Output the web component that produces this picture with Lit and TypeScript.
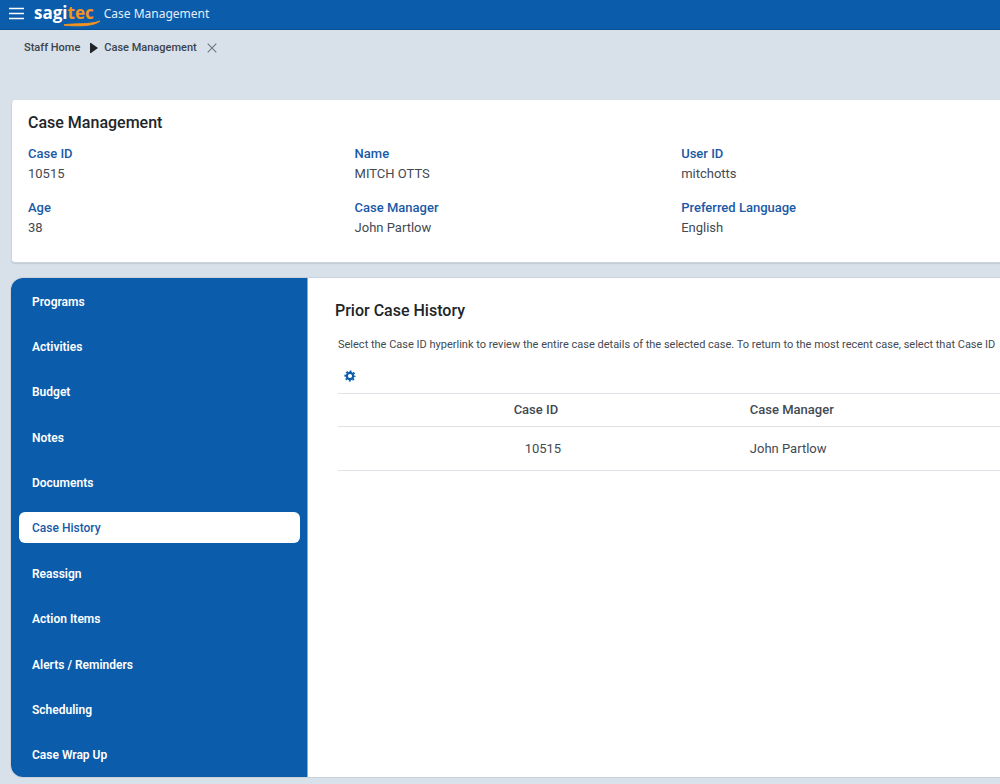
import { LitElement, html, css } from "lit";
import { customElement, state } from "lit/decorators.js";

const FIELDS = [
  ["Case ID", "10515"],
  ["Name", "MITCH OTTS"],
  ["User ID", "mitchotts"],
  ["Age", "38"],
  ["Case Manager", "John Partlow"],
  ["Preferred Language", "English"],
];

const SECTIONS = [
  "Programs",
  "Activities",
  "Budget",
  "Notes",
  "Documents",
  "Case History",
  "Reassign",
  "Action Items",
  "Alerts / Reminders",
  "Scheduling",
  "Case Wrap Up",
];

@customElement("app-root")
export class AppRoot extends LitElement {
  static styles = css`
    :host {
      display: flex;
      flex-direction: column;
      box-sizing: border-box;
      min-height: 100vh;
      padding-bottom: 7px;
      overflow-x: hidden;
      background: #d8e0ea;
      color: #424a52;
      font: 400 13px/20px Roboto, sans-serif;
    }
    *, *::before, *::after { box-sizing: border-box; }
    h1, h2, p, dl, dd, ul { margin: 0; padding: 0; }
    button {
      display: flex;
      border: 0;
      padding: 0;
      background: none;
      cursor: pointer;
    }
    .topbar {
      display: flex;
      align-items: center;
      height: 30px;
      padding: 0 9px 2px;
      background: #0b5cab;
      border-bottom: 1px solid #084f97;
      color: #fff;
    }
    .brand {
      position: relative;
      margin-left: 10px;
      padding-bottom: 2px;
      font: 700 17px/24px "Open Sans", sans-serif;
      color: #fff;
    }
    .brand .accent { color: #f7941d; }
    .swoosh {
      position: absolute;
      left: 29px;
      bottom: 0;
    }
    .product {
      margin-left: 10px;
      font: 400 12px/24px "Noto Sans", sans-serif;
      color: #e4eefa;
    }
    .crumbs {
      display: flex;
      align-items: center;
      height: 35px;
      padding-left: 24px;
      font-size: 11px;
      font-weight: 500;
    }
    .crumbs a { color: #3c434a; text-decoration: none; }
    .crumbs .arrow { margin: 0 6px 0 10px; }
    .crumbs button { margin-left: 10px; }
    .summary {
      margin: 35px 0 0 11px;
      padding: 13px 0 24px 16px;
      background: #fff;
      border: 1px solid #ccd4dd;
      border-width: 0 0 1px 1px;
      border-radius: 4px 0 0 4px;
      box-shadow: 0 1px 1px #c3cbd5;
    }
    h1, h2 {
      font-size: 16px;
      line-height: 20px;
      font-weight: 500;
      color: #212529;
    }
    .fields {
      display: grid;
      grid-template-columns: 33.6% 33.6% 1fr;
      row-gap: 14px;
      margin-top: 11px;
    }
    dt { font-weight: 500; color: #1a59a6; line-height: 20px; }
    .work {
      display: flex;
      flex: 1;
      margin: 15px 0 0 11px;
      background: #fff;
      border-radius: 12px 0 0 12px;
      box-shadow: 0 0 0 1px #cbd1d8;
    }
    .sections {
      display: flex;
      flex: none;
      width: 297px;
      border-radius: 12px 0 0 12px;
      background: #0b5cab;
      border-right: 1px solid #89a9cd;
    }
    .sections ul {
      display: flex;
      flex: 1;
      flex-direction: column;
      list-style: none;
    }
    .sections li { display: flex; flex: 1; padding: 7px 7px 7px 8px; }
    .sections a {
      display: flex;
      flex: 1;
      align-items: center;
      padding: 2px 0 0 13px;
      border-radius: 6px;
      color: #fff;
      font-size: 12px;
      line-height: 16px;
      font-weight: 600;
      text-decoration: none;
    }
    .sections a.active { background: #fff; color: #1a59a6; font-weight: 500; }
    .history { flex: 1; min-width: 0; padding: 23px 0 0 27px; }
    .body { padding-left: 3px; }
    .hint {
      margin-top: 14px;
      font-size: 11px;
      white-space: nowrap;
    }
    .gear { margin: 15px 0 11px 6px; }
    table { width: 100%; table-layout: fixed; border-collapse: collapse; }
    th, td { padding: 0 8px; text-align: left; border-bottom: 1px solid #dee2e6; }
    th { height: 33px; font-weight: 500; }
    thead tr { border-top: 1px solid #dee2e6; }
    td { height: 44px; }
    .case-col { width: 61%; }
    th.case-col { text-align: center; padding: 0 8px 0 0; }
    td.case-col { text-align: center; padding: 0 0 0 6px; }
  `;

  @state() private active = "Case History";

  private select(event: Event, name: string) {
    event.preventDefault();
    this.active = name;
  }

  render() {
    return html`
      <header class="topbar">
        <button aria-label="Menu">
          <svg width="15" height="13" viewBox="0 0 15 13" stroke="#fff" stroke-width="1.6">
            <path d="M0 1.5h15M0 6.5h15M0 11.5h15" />
          </svg>
        </button>
        <span class="brand">sagi<span class="accent">tec</span>
          <svg class="swoosh" width="38" height="9" viewBox="0 0 38 9">
            <path d="M1 6.8C12 5 26 7 37 3C31 8.4 15 8.4 1 7.2Z" fill="#f7941d" stroke="#f7941d" stroke-width=".9" />
          </svg>
        </span>
        <span class="product">Case Management</span>
      </header>
      <nav class="crumbs" aria-label="Breadcrumb">
        <a href="#home">Staff Home</a>
        <svg class="arrow" width="8" height="10" viewBox="0 0 8 10"><path d="M0 0h1l7 5-7 5H0z" fill="#212529" /></svg>
        <a href="#case">Case Management</a>
        <button aria-label="Close">
          <svg width="10" height="10" viewBox="0 0 10 10" stroke="#6d757d" stroke-width="1.1"><path d="M.7.7l8.6 8.6M9.3.7L.7 9.3" /></svg>
        </button>
      </nav>
      <section class="summary">
        <h1>Case Management</h1>
        <dl class="fields">
          ${FIELDS.map(([label, value]) => html`<div><dt>${label}</dt><dd>${value}</dd></div>`)}
        </dl>
      </section>
      <main class="work">
        <nav class="sections" aria-label="Case sections">
          <ul>
            ${SECTIONS.map(
              (name) => html`<li>
                <a href="#" class=${name === this.active ? "active" : ""}
                  @click=${(e: Event) => this.select(e, name)}>${name}</a>
              </li>`
            )}
          </ul>
        </nav>
        <section class="history">
          <h2>Prior Case History</h2>
          <div class="body">
            <p class="hint">Select the Case ID hyperlink to review the entire case details of the selected case. To return to the most recent case, select that Case ID</p>
            <button class="gear" aria-label="Table settings">
              <svg width="12" height="12" viewBox="0 0 12 12" fill="none" stroke="#0b5cab">
                <circle cx="6" cy="6" r="3.2" stroke-width="2.2" />
                <circle cx="6" cy="6" r="4.8" stroke-width="1.6" stroke-dasharray="2 1.77" stroke-dashoffset="1" />
              </svg>
            </button>
            <table>
              <thead>
                <tr><th class="case-col" scope="col">Case ID</th><th scope="col">Case Manager</th></tr>
              </thead>
              <tbody>
                <tr><td class="case-col">10515</td><td>John Partlow</td></tr>
              </tbody>
            </table>
          </div>
        </section>
      </main>
    `;
  }
}
